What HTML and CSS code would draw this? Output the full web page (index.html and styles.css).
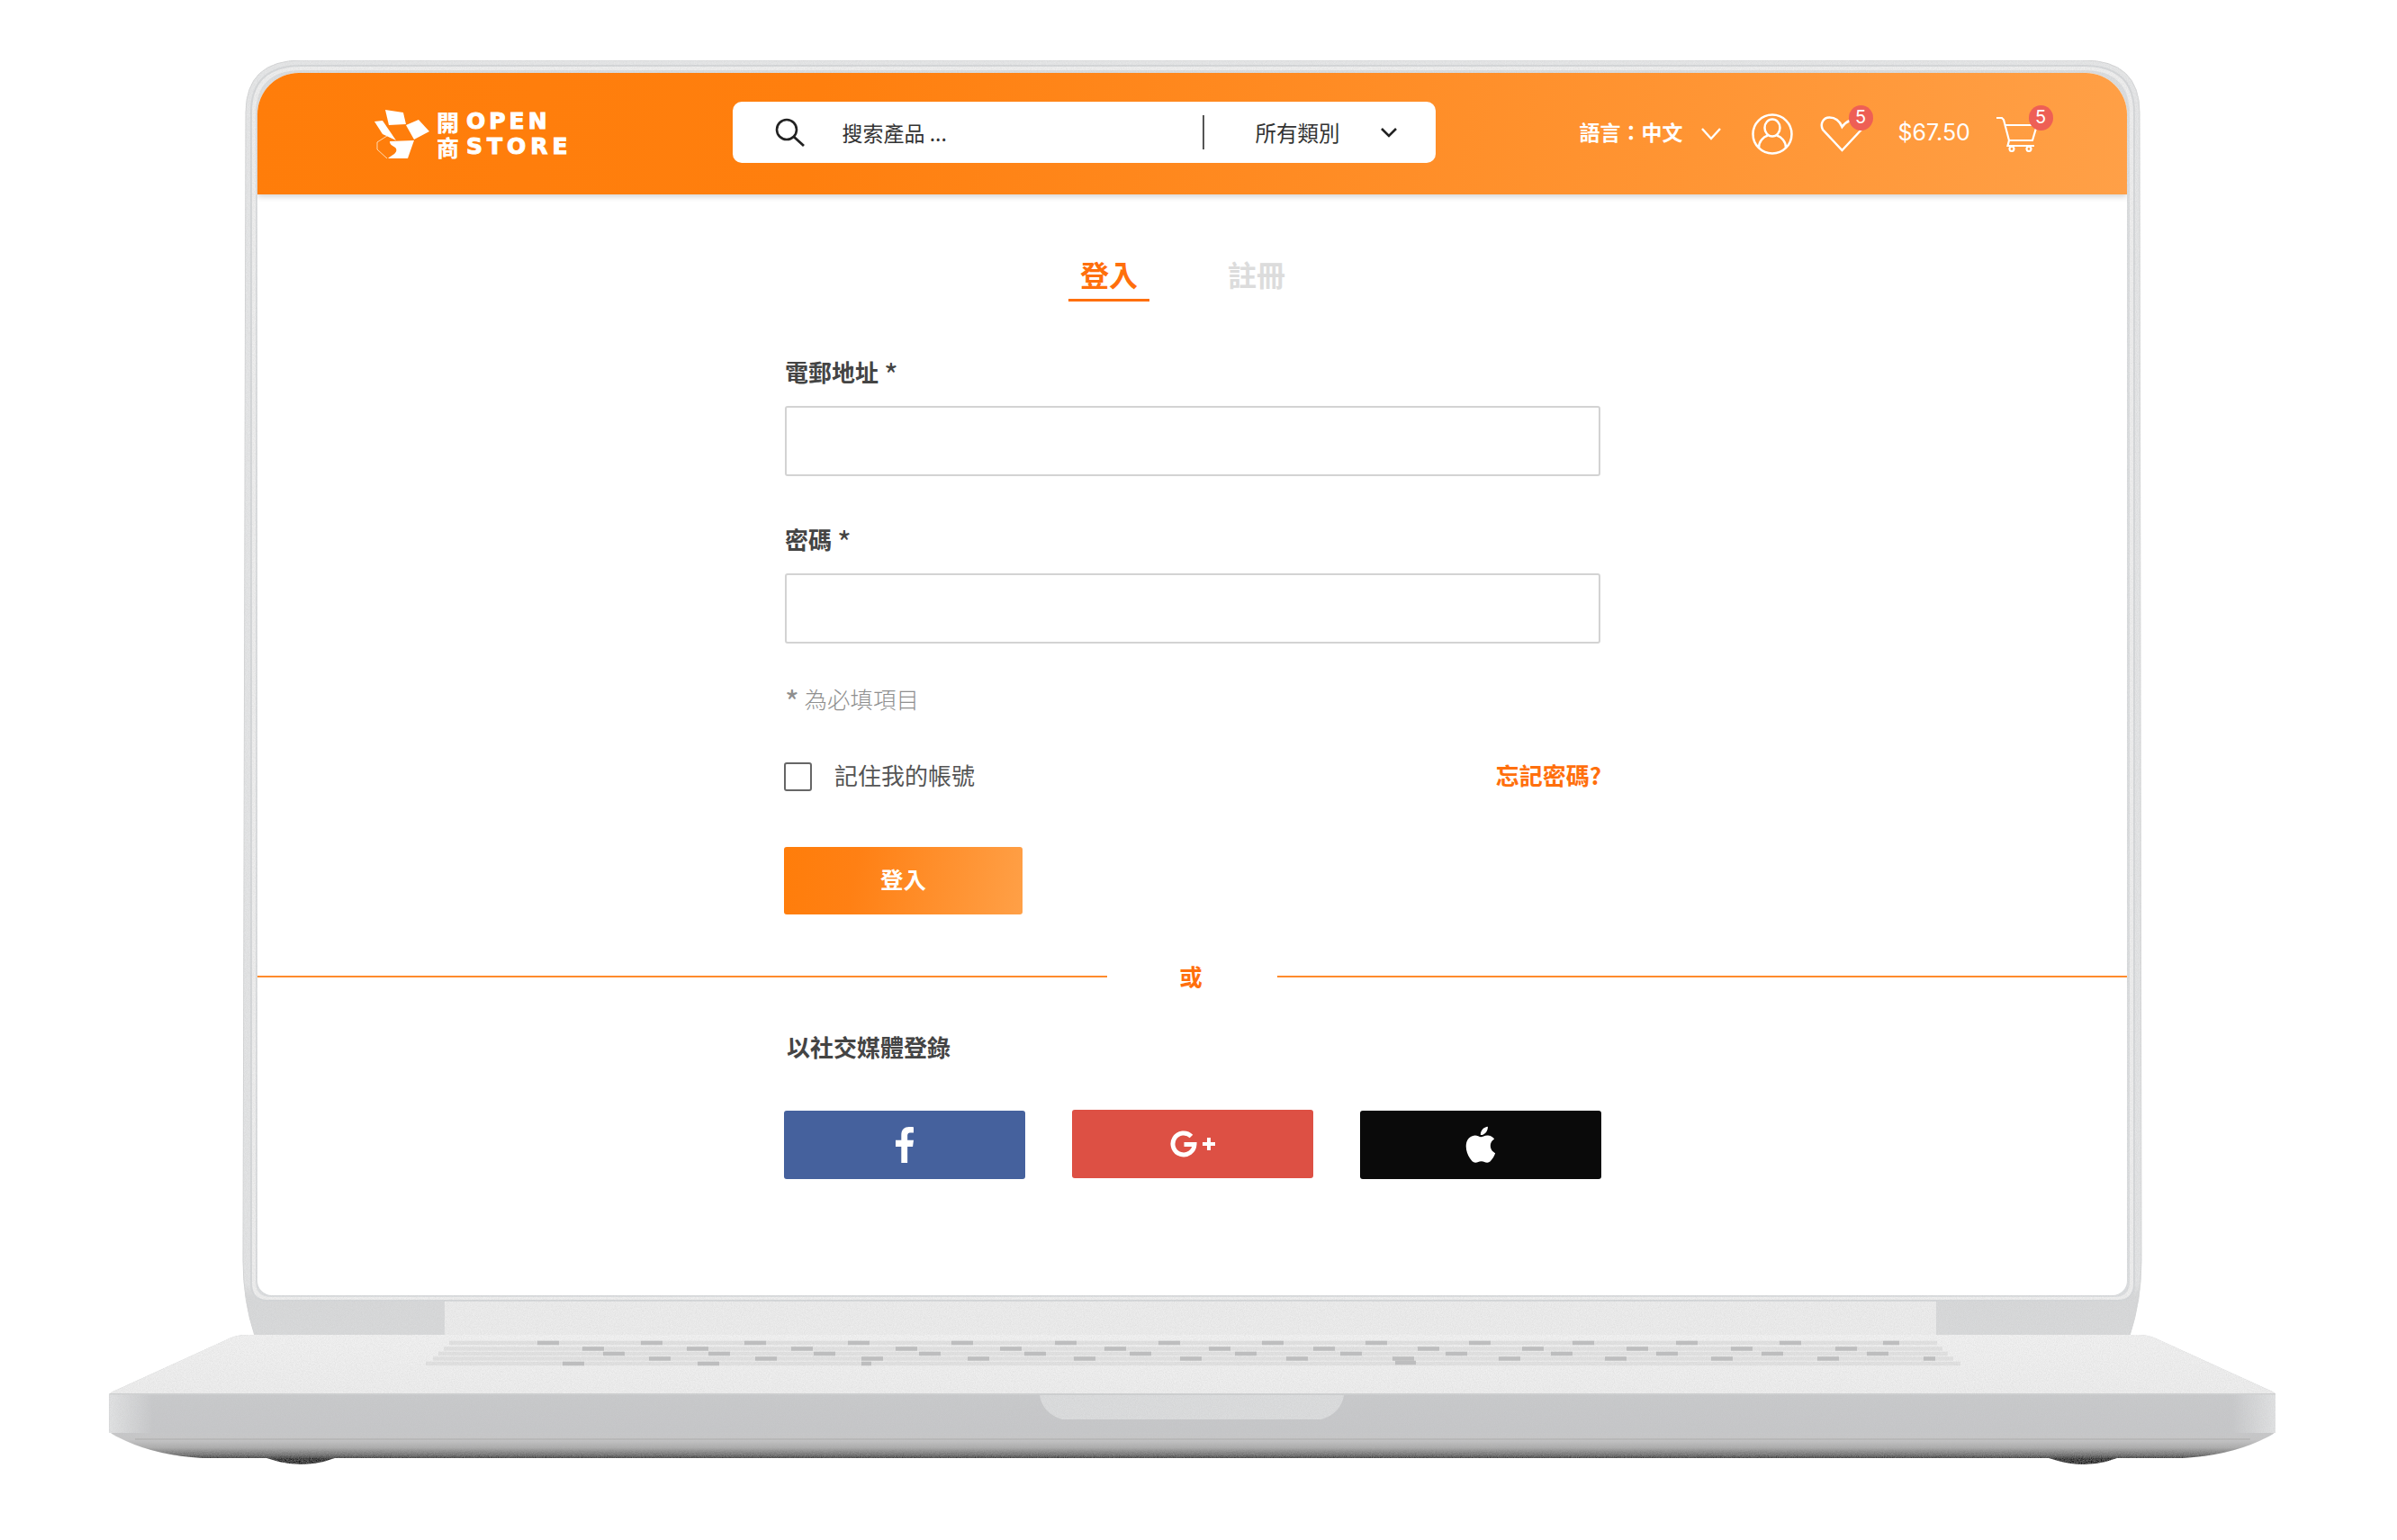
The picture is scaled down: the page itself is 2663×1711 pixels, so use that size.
FILE: index.html
```html
<!DOCTYPE html>
<html lang="zh-Hant">
<head>
    <meta charset="UTF-8">
    <meta name="viewport" content="width=device-width, initial-scale=1.0">
    <title>開商 Open Store</title>
    <link rel="stylesheet" href="styles.css">
</head>
<body>
<div class="stage">

    <!-- laptop body -->
    <svg class="laptop" width="2663" height="1711" viewBox="0 0 2663 1711">
        <defs>
            <linearGradient id="lidFill" gradientUnits="userSpaceOnUse" x1="0" y1="60" x2="0" y2="1483">
                <stop offset="0" stop-color="#e6e7e8"/>
                <stop offset="0.96" stop-color="#e3e4e5"/>
                <stop offset="0.97" stop-color="#d8d9da"/>
                <stop offset="1" stop-color="#d9dadb"/>
            </linearGradient>
            <linearGradient id="deckFill" x1="0" y1="0" x2="0" y2="1">
                <stop offset="0" stop-color="#f2f2f2"/>
                <stop offset="1" stop-color="#eeeeee"/>
            </linearGradient>
            <linearGradient id="sideFill" x1="0" y1="0" x2="0" y2="1">
                <stop offset="0" stop-color="#c9cacc"/>
                <stop offset="1" stop-color="#c6c7c9"/>
            </linearGradient>
            <linearGradient id="sideEnds" x1="0" y1="0" x2="1" y2="0">
                <stop offset="0" stop-color="#e2e3e4"/>
                <stop offset="0.02" stop-color="#e2e3e4" stop-opacity="0"/>
                <stop offset="0.98" stop-color="#e2e3e4" stop-opacity="0"/>
                <stop offset="1" stop-color="#e2e3e4"/>
            </linearGradient>
            <linearGradient id="underFill" gradientUnits="userSpaceOnUse" x1="0" y1="1588" x2="0" y2="1621">
                <stop offset="0" stop-color="#c8c9cb"/>
                <stop offset="0.35" stop-color="#c6c6c7"/>
                <stop offset="0.62" stop-color="#aaaaaa"/>
                <stop offset="0.86" stop-color="#6e6e6e"/>
                <stop offset="1" stop-color="#2c2c2c"/>
            </linearGradient>
            <filter id="grain" x="0" y="0" width="100%" height="100%">
                <feTurbulence type="fractalNoise" baseFrequency="0.9" numOctaves="2" seed="4" result="n"/>
                <feColorMatrix in="n" type="matrix" values="0 0 0 0 0.5  0 0 0 0 0.5  0 0 0 0 0.5  0.5 0 0 0 -0.14" result="g"/>
                <feComposite in="g" in2="SourceAlpha" operator="in" result="c"/>
                <feMerge><feMergeNode in="SourceGraphic"/><feMergeNode in="c"/></feMerge>
            </filter>
        </defs>

        <g filter="url(#grain)">
            <!-- feet -->
            <path d="M284 1615 Q310 1627 335 1627 Q360 1627 383 1615 Z" fill="#1c1c1c"/>
            <path d="M2264 1615 Q2290 1627 2315 1627 Q2340 1627 2363 1615 Z" fill="#1c1c1c"/>

            <!-- lid -->
            <path d="M273 125 Q273 67 335 67 H2315 Q2377 67 2377 125 L2379 1400 Q2379 1445 2366 1484 H283 Q270 1445 270 1400 Z" fill="url(#lidFill)" stroke="#d6d7d8" stroke-width="1"/>
            <path d="M278 125 Q278 72 335 72 H2315 Q2372 72 2372 125 V1426 Q2372 1446 2352 1446 H298 Q278 1446 278 1426 Z" fill="#d6d8da"/>
            <path d="M280 125 Q280 74 335 74 H2315 Q2370 74 2370 125 V1426 Q2370 1444 2352 1444 H298 Q280 1444 280 1426 Z" fill="#efefef"/>
            <path d="M284 127 Q284 78 335 78 H2315 Q2366 78 2366 127 V1424 Q2366 1441 2349 1441 H301 Q284 1441 284 1424 Z" fill="#dcdee0"/>

            <!-- hinge -->
            <rect x="494" y="1446" width="1657" height="38" fill="#ededed"/>

            <!-- base -->
            <path d="M121.500 1590 V1550 Q122 1547 130 1544 L255 1487 Q263 1483 275 1483 H2375 Q2387 1483 2395 1487 L2520 1544 Q2528 1547 2528 1550 V1590 Q2528 1593 2510 1601 Q2475 1617 2425 1620 H225 Q175 1617 140 1601 Q122 1593 121.500 1590 Z" fill="url(#underFill)"/>
            <path d="M121.500 1549 Q122 1547 130 1544 L255 1487 Q263 1483 275 1483 H2375 Q2387 1483 2395 1487 L2520 1544 Q2528 1547 2528 1549 Z" fill="url(#deckFill)"/>
            <rect x="121.500" y="1549" width="2406.500" height="43" fill="url(#sideFill)"/>
            <rect x="121.500" y="1549" width="2406.500" height="43" fill="url(#sideEnds)"/>
            <rect x="121.500" y="1548" width="2406.500" height="1.500" fill="#d2d3d4"/>
            <rect x="150" y="1598.500" width="2350" height="1" fill="#a9a9a9"/>

            <!-- trackpad notch -->
            <path d="M1155 1550 H1493 Q1490 1570 1468 1577 H1180 Q1158 1570 1155 1550 Z" fill="#dcddde"/>

            <!-- keyboard: light rows with grey keys drawn as dashes -->
            <polygon points="501,1488 2149,1488 2184,1518 466,1518" fill="#f1f1f1"/>
            <g stroke="#e2e2e2" stroke-width="4.500">
                <line x1="499" y1="1492" x2="2152" y2="1492"/>
                <line x1="493" y1="1498.500" x2="2158" y2="1498.500"/>
                <line x1="487" y1="1504" x2="2164" y2="1504"/>
                <line x1="481" y1="1509.500" x2="2170" y2="1509.500"/>
                <line x1="473" y1="1515" x2="2178" y2="1515"/>
            </g>
            <g stroke="#bdbebf" stroke-width="4.500">
                <line x1="597" y1="1492" x2="2110" y2="1492" stroke-dasharray="24 91"/>
                <line x1="647" y1="1498.500" x2="2130" y2="1498.500" stroke-dasharray="24 92"/>
                <line x1="670" y1="1504" x2="2140" y2="1504" stroke-dasharray="24 93"/>
                <line x1="721" y1="1509.500" x2="2150" y2="1509.500" stroke-dasharray="24 94"/>
                <line x1="625" y1="1515" x2="800" y2="1515" stroke-dasharray="24 126"/>
                <line x1="957" y1="1515" x2="968" y2="1515"/>
                <line x1="1550" y1="1514" x2="1573" y2="1514"/>
            </g>
        </g>
    </svg>

    <div class="screen">

        <header class="topbar">
            <div class="logo">
                <svg class="logo-mark" width="61" height="54" viewBox="0 0 61 54">
                    <path d="M12 0 L32 3 L35 16 L16 17 Z" fill="#fff"/>
                    <path d="M35 17 L49 11 L61 24 L44 33 Z" fill="#fff"/>
                    <path d="M0 13 L9 12 L24 34 L9 27 Z" fill="#fff"/>
                    <path d="M17 35 L44 34 L37 54 L15 54 C20 50 26 48 24 43 C22 40 17 40 17 35 Z" fill="#fff"/>
                    <path d="M14 29 L3 36 L3 44 L14 54" fill="none" stroke="#ffd9b0" stroke-width="1"/>
                </svg>
                <div class="logo-cjk">開商</div>
                <div class="logo-latin">
                    <span>OPEN</span>
                    <span class="logo-store">STORE</span>
                </div>
            </div>

            <div class="search">
                <svg class="search-icon" width="33" height="32" viewBox="0 0 33 32">
                    <circle cx="13" cy="13" r="11" fill="none" stroke="#222" stroke-width="2.600"/>
                    <line x1="21" y1="21" x2="32" y2="31" stroke="#222" stroke-width="2.800"/>
                </svg>
                <span class="search-text">搜索產品 ...</span>
                <span class="search-divider"></span>
                <span class="search-cat">所有類別</span>
                <svg class="search-chevron" width="18" height="11" viewBox="0 0 18 11">
                    <polyline points="1,1 9,9 17,1" fill="none" stroke="#222" stroke-width="2.600"/>
                </svg>
            </div>

            <div class="lang">語言：中文</div>
            <svg class="lang-chevron" width="22" height="14" viewBox="0 0 22 14">
                <polyline points="1,1 11,12 21,1" fill="none" stroke="#fff" stroke-width="2.400"/>
            </svg>

            <svg class="user-icon" width="46" height="46" viewBox="0 0 46 46">
                <g fill="none" stroke="#fff" stroke-width="2.500">
                    <circle cx="23" cy="23" r="21.500"/>
                    <ellipse cx="23" cy="16" rx="8.500" ry="9.500"/>
                    <path d="M8 38 C8 31 13 26 18 24.500 M38 38 C38 31 33 26 28 24.500"/>
                </g>
            </svg>

            <div class="icon-wrap heart-wrap">
                <svg width="49" height="40" viewBox="0 0 49 40">
                    <path d="M33 5 Q28 7 24.500 12 C22 6 17 1.500 10.500 1.500 C3 1.500 0 9 3 15 L24.500 38 L46 15" fill="none" stroke="#fff" stroke-width="2.500"/>
                </svg>
                <span class="badge">5</span>
            </div>

            <div class="price">$67.50</div>

            <div class="icon-wrap cart-wrap">
                <svg width="46" height="40" viewBox="0 0 46 40">
                    <g fill="none" stroke="#fff" stroke-width="2.200">
                        <path d="M0 2 H6 L8 4 L14 27 H40 L45 10 H9 M14 27 L12.500 33 H42"/>
                        <circle cx="17" cy="36.500" r="2.500"/>
                        <circle cx="36" cy="36.500" r="2.500"/>
                    </g>
                </svg>
                <span class="badge">5</span>
            </div>
        </header>

        <main class="content">
            <div class="form-col">
                <div class="tabs">
                    <div class="tab tab-active">登入</div>
                    <div class="tab">註冊</div>
                </div>

                <label class="field-label first">電郵地址 <span class="star">*</span></label>
                <div class="field-input"></div>

                <label class="field-label">密碼 <span class="star">*</span></label>
                <div class="field-input"></div>

                <p class="required-note"><span class="star">*</span> 為必填項目</p>

                <div class="remember-row">
                    <span class="checkbox"></span>
                    <span class="remember-text">記住我的帳號</span>
                    <a class="forgot">忘記密碼?</a>
                </div>

                <button class="login-btn">登入</button>
            </div>

            <div class="or-row">
                <span class="or-line left"></span>
                <span class="or-text">或</span>
                <span class="or-line"></span>
            </div>

            <div class="form-col">
                <h4 class="social-title">以社交媒體登錄</h4>
                <div class="social-row">
                    <div class="social-btn fb">
                        <svg width="20" height="40" viewBox="0 0 19 38">
                            <path d="M12.500 38V21h5.600l.9-7h-6.500V9.600c0-2 .6-3.400 3.400-3.400H19V.3C18.400.2 16.400 0 14.200 0 9.400 0 6 3 6 8.500V14H0v7h6v17z" fill="#fff"/>
                        </svg>
                    </div>
                    <div class="social-btn gplus">
                        <svg width="50" height="30" viewBox="0 0 50 30">
                            <path d="M23.500 6.500A12 12 0 1 0 27 15.500H15.500" fill="none" stroke="#fff" stroke-width="5"/>
                            <path d="M36 15H50M43 8V22" fill="none" stroke="#fff" stroke-width="4"/>
                        </svg>
                    </div>
                    <div class="social-btn apple">
                        <svg width="35" height="42" viewBox="3.500 2 17.500 20.200">
                            <path d="M18.710 19.500c-.83 1.240-1.710 2.450-3.050 2.470-1.340.03-1.770-.79-3.290-.79-1.530 0-2 .77-3.270.82-1.310.05-2.300-1.320-3.140-2.530C4.250 17 2.940 12.450 4.700 9.390c.87-1.520 2.430-2.480 4.120-2.510 1.280-.02 2.500.87 3.290.87.78 0 2.260-1.070 3.810-.91.65.03 2.470.26 3.640 1.980-.09.06-2.170 1.280-2.150 3.810.03 3.020 2.650 4.030 2.680 4.040-.03.07-.42 1.440-1.380 2.830M13 3.500c.73-.83 1.940-1.460 2.940-1.500.13 1.170-.34 2.350-1.040 3.190-.69.85-1.830 1.510-2.950 1.420-.15-1.150.41-2.350 1.050-3.110z" fill="#fff"/>
                        </svg>
                    </div>
                </div>
            </div>
        </main>
    </div>
</div>
</body>
</html>
```

FILE: styles.css
```css
* {
  margin: 0;
  padding: 0;
  box-sizing: border-box;
}

body {
  background: #fff;
  font-family: "Noto Sans CJK TC", "Noto Sans", sans-serif;
  color: #444;
}

.stage {
  position: relative;
  width: 2663px;
  height: 1711px;
  overflow: hidden;
}

.laptop {
  position: absolute;
  left: 0;
  top: 0;
}

.screen {
  position: absolute;
  left: 286px;
  top: 81px;
  width: 2077px;
  height: 1358px;
  background: #fff;
  border-radius: 46px 46px 16px 16px;
  overflow: hidden;
}

/* top bar */
.topbar {
  display: flex;
  align-items: center;
  height: 135px;
  padding-left: 130px;
  background: linear-gradient(100deg, #ff7d0a 0%, #ff7f0e 30%, #ffa047 100%);
  box-shadow: 0 3px 6px rgba(0, 0, 0, 0.16);
  position: relative;
  color: #fff;
}

.logo {
  display: flex;
  align-items: center;
  width: 397.500px;
}

.logo-mark {
  margin-right: 8px;
}

.logo-cjk {
  width: 26px;
  font-size: 25px;
  font-weight: 900;
  line-height: 28px;
  margin-right: 7px;
}

.logo-latin {
  display: flex;
  flex-direction: column;
  font-family: "DejaVu Sans", sans-serif;
  font-size: 25px;
  font-weight: 700;
  line-height: 28px;
  letter-spacing: 4px;
  -webkit-text-stroke: 1px #fff;
}

.logo-store {
  letter-spacing: 5px;
}

.search {
  display: flex;
  align-items: center;
  width: 781px;
  height: 68px;
  margin-top: -3px;
  padding-left: 47px;
  background: #fff;
  border-radius: 10px;
  color: #333;
}

.search-icon {
  margin-right: 42px;
  flex: none;
}

.search-text {
  width: 400px;
  font-size: 23px;
}

.search-divider {
  width: 2px;
  height: 38px;
  background: #555;
  margin-right: 57px;
}

.search-cat {
  font-size: 23.500px;
  margin-right: 45px;
}

.lang {
  margin-left: 160px;
  margin-bottom: 5px;
  font-size: 23px;
  font-weight: 700;
  white-space: nowrap;
}

.lang-chevron {
  margin-left: 20px;
}

.user-icon {
  margin-left: 34px;
}

.icon-wrap {
  position: relative;
  display: flex;
}

.heart-wrap {
  margin-left: 30px;
}

.price {
  margin-left: 38px;
  margin-bottom: 3px;
  font-family: Inter, sans-serif;
  font-size: 25px;
  width: 83px;
  white-space: nowrap;
}

.cart-wrap {
  margin-left: 26px;
}

.badge {
  position: absolute;
  top: -12px;
  width: 27px;
  height: 28px;
  border-radius: 50%;
  background: #ee5f55;
  color: #fff;
  font-family: Inter, sans-serif;
  font-size: 20px;
  line-height: 27px;
  text-align: center;
}

.heart-wrap .badge {
  right: -10px;
}

.cart-wrap .badge {
  right: -17px;
}

/* login form */
.content {
  display: flex;
  flex-direction: column;
  align-items: center;
}

.form-col {
  width: 906px;
  margin-left: 1px;
}

.tabs {
  display: flex;
  gap: 74px;
  margin-top: 70px;
  margin-left: 315px;
}

.tab {
  width: 90px;
  height: 49px;
  font-size: 32px;
  font-weight: 700;
  line-height: 36px;
  text-align: center;
  color: #dcdcdc;
}

.tab-active {
  color: #ff6f0c;
  border-bottom: 3px solid #ff6f0c;
}

.field-label {
  display: block;
  margin-top: 53px;
  margin-bottom: 21px;
  font-size: 26px;
  font-weight: 700;
  line-height: 34px;
}

.field-label.first {
  margin-top: 61px;
}

.star {
  font-size: 34px;
  font-weight: 400;
  line-height: 0;
  vertical-align: -6px;
}

.field-input {
  height: 78px;
  border: 2.500px solid #d3d3d3;
  border-radius: 3px;
}

.required-note {
  margin-top: 44px;
  font-size: 25.500px;
  font-weight: 300;
  line-height: 34px;
  color: #8f8f8f;
}

.remember-row {
  display: flex;
  align-items: center;
  height: 32px;
  margin-top: 54px;
}

.checkbox {
  width: 31px;
  height: 32px;
  border: 2px solid #666;
  border-radius: 3px;
  margin-left: -1px;
  margin-right: 25px;
}

.remember-text {
  margin-bottom: 5px;
  font-size: 26px;
  color: #555;
}

.forgot {
  margin-left: auto;
  margin-right: -1px;
  margin-bottom: 5px;
  font-size: 26px;
  font-weight: 700;
  color: #ff6f0c;
}

.login-btn {
  display: block;
  width: 265px;
  height: 75px;
  margin-top: 62px;
  margin-left: -1px;
  padding-bottom: 6px;
  border: none;
  border-radius: 3px;
  background: linear-gradient(100deg, #ff7d0a 0%, #ff8014 30%, #ffa047 100%);
  color: #fff;
  font-family: inherit;
  font-size: 25.500px;
  font-weight: 700;
}

.or-row {
  display: flex;
  align-items: center;
  width: 100%;
  height: 34px;
  margin-top: 54px;
}

.or-line {
  flex: 1;
  height: 2px;
  margin-top: -4px;
  background: #ff8b2c;
}

.or-line.left {
  flex: none;
  width: 944px;
}

.or-text {
  width: 189px;
  font-size: 25.500px;
  font-weight: 700;
  text-align: center;
  color: #ff6f0c;
  padding-right: 3px;
  padding-bottom: 7px;
}

.social-title {
  margin-top: 42px;
  margin-left: 2px;
  font-size: 26px;
  font-weight: 700;
  line-height: 34px;
}

.social-row {
  display: flex;
  justify-content: space-between;
  align-items: flex-start;
  margin-top: 54px;
  width: 908px;
  margin-left: -1px;
}

.social-btn {
  display: flex;
  align-items: center;
  justify-content: center;
  width: 268px;
  height: 76px;
  border-radius: 3px;
}

.fb {
  background: #45619d;
}

.gplus {
  background: #dd5044;
  margin-top: -1px;
}

.apple {
  background: #0a0a0a;
}
```
